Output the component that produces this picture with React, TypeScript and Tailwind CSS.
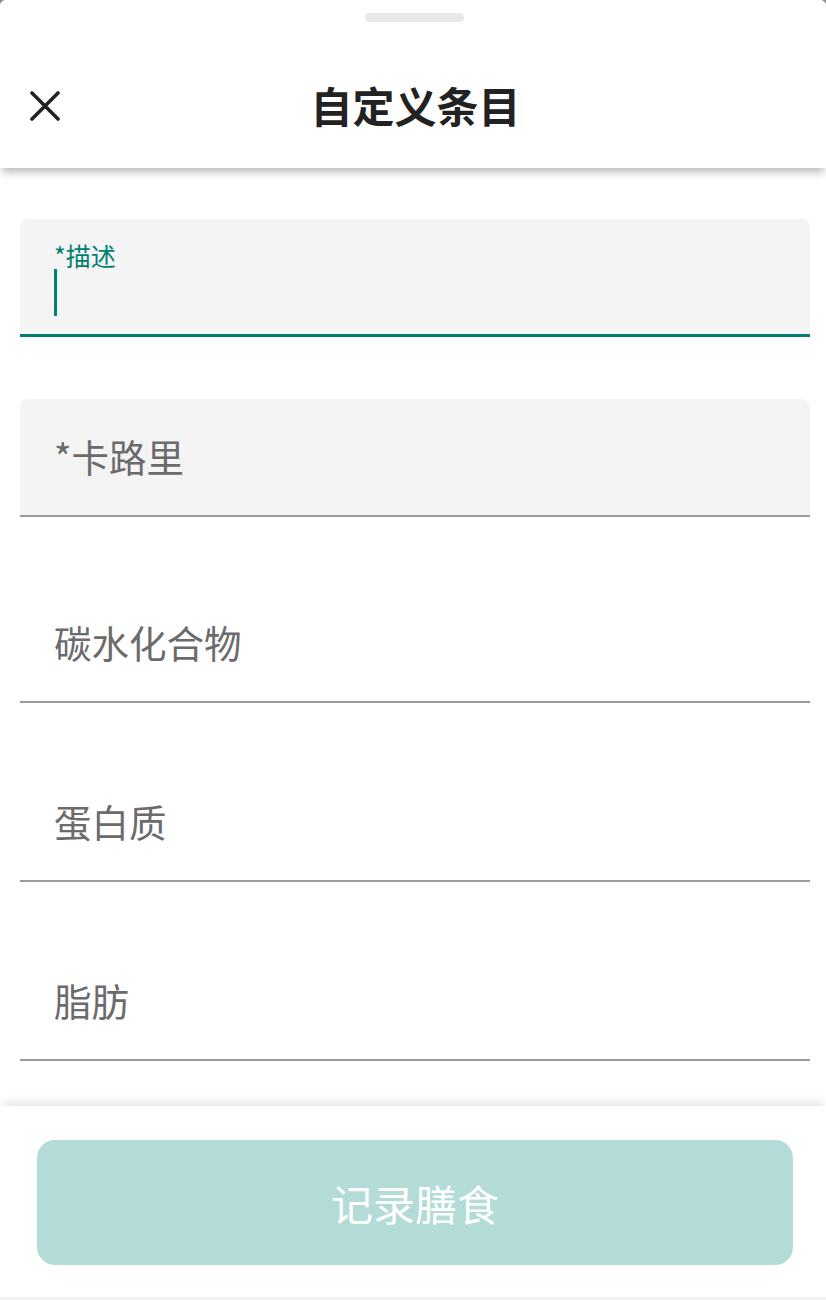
import React from "react";

const FONT = { fontFamily: '"Noto Sans CJK SC", "Noto Sans", sans-serif' };

function CloseIcon() {
  return (
    <svg width="30" height="30" viewBox="0 0 30 30" fill="none">
      <path d="M2 2 L28 28 M28 2 L2 28" stroke="#222222" strokeWidth="3.6" strokeLinecap="round" />
    </svg>
  );
}

function PlainField({ label, mt, filled }: { label: string; mt: string; filled?: boolean }) {
  return (
    <div
      className={`${mt} ml-[20px] mr-[16px] h-[118px] flex items-center pb-[2px] px-[34px] border-b-2 border-[#9a9a9a] ${
        filled ? "bg-[#f4f4f4] rounded-t-[8px]" : ""
      }`}
    >
      <span className="text-[37.5px] leading-[44px] text-[#6b6b6b]">{label}</span>
    </div>
  );
}

export default function App() {
  return (
    <div className="w-full h-[1300px] bg-[#8a8a8a]" style={FONT}>
      <div className="w-full h-full bg-white rounded-t-[6px] flex flex-col overflow-hidden">
        <header className="relative z-10 h-[168px] shrink-0 bg-white flex flex-col shadow-[0_6px_9px_-2px_rgba(0,0,0,0.28)]">
          <div className="mt-[13px] ml-[365px] w-[99px] h-[9px] rounded-full bg-[#e8e8e8]" />
          <div className="mt-[43px] h-[80px] grid grid-cols-[1fr_auto_1fr] items-center">
            <div className="pl-[30px] pt-[2px] flex items-center">
              <CloseIcon />
            </div>
            <h1 className="ml-[5px] text-[42px] leading-[50px] font-bold text-[#222222]">自定义条目</h1>
            <div />
          </div>
        </header>

        <main className="flex-1 overflow-hidden">
          <div className="mt-[51px] ml-[20px] mr-[16px] h-[118px] bg-[#f4f4f4] rounded-t-[8px] border-b-[3px] border-[#00806f] pt-[22px] px-[34px]">
            <div className="text-[25px] leading-[28px] text-[#00806f]">*描述</div>
            <div className="w-[3px] h-[47px] bg-[#00806f]" />
          </div>
          <PlainField label="*卡路里" mt="mt-[62px]" filled />
          <PlainField label="碳水化合物" mt="mt-[68px]" />
          <PlainField label="蛋白质" mt="mt-[61px]" />
          <PlainField label="脂肪" mt="mt-[61px]" />
        </main>

        <footer className="relative z-10 h-[194px] shrink-0 bg-white flex flex-col shadow-[0_-6px_10px_-3px_rgba(0,0,0,0.13)]">
          <div className="mt-[34px] ml-[37px] mr-[33px] h-[125px] rounded-[18px] bg-[#b3dbd7] flex items-center justify-center">
            <span className="text-[42px] leading-[50px] text-white">记录膳食</span>
          </div>
          <div className="mt-auto h-[3px] bg-[#f1f1f1]" />
        </footer>
      </div>
    </div>
  );
}
